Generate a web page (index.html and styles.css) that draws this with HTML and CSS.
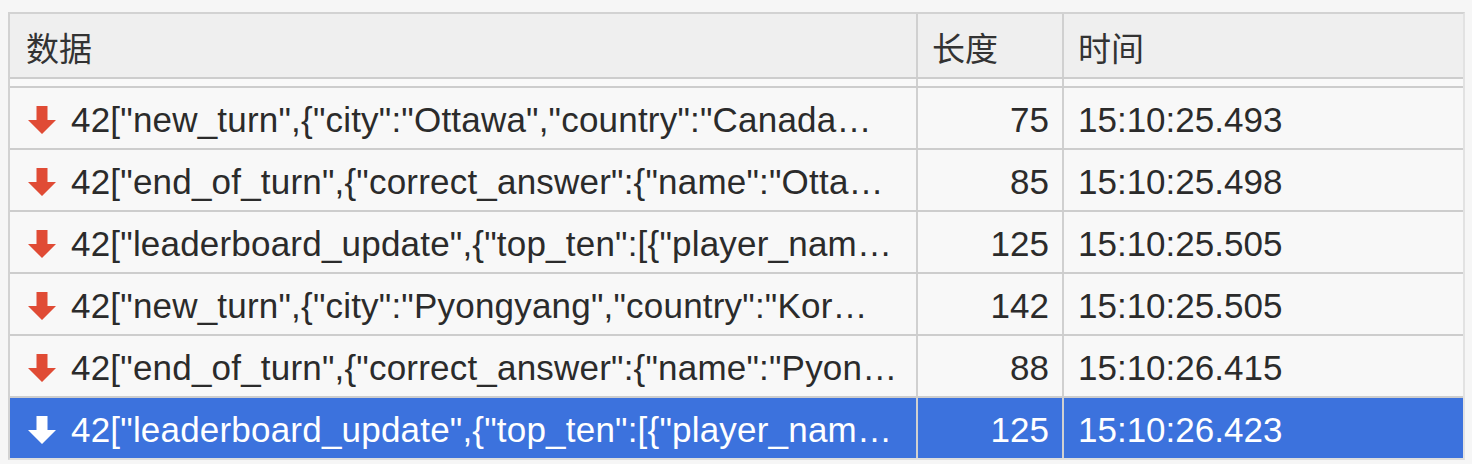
FILE: index.html
```html
<!DOCTYPE html>
<html>
<head>
    <meta charset="utf-8">
    <title>Messages</title>
    <link rel="stylesheet" href="styles.css">
</head>
<body>
    <div class="frames">
        <div class="row head">
            <div class="cell data">数据</div>
            <div class="cell len">长度</div>
            <div class="cell time">时间</div>
        </div>
        <div class="spacer">
            <div class="cell"></div>
            <div class="cell"></div>
            <div class="cell"></div>
        </div>

        <div class="row">
            <div class="cell data"><svg class="arrow" viewBox="0 0 28 28"><path d="M8.5 0h11v14h8.5L14 28 0 14h8.5z"/></svg><span class="text">42["new_turn",{"city":"Ottawa","country":"Canada…</span></div>
            <div class="cell len">75</div>
            <div class="cell time">15:10:25.493</div>
        </div>
        <div class="row">
            <div class="cell data"><svg class="arrow" viewBox="0 0 28 28"><path d="M8.5 0h11v14h8.5L14 28 0 14h8.5z"/></svg><span class="text">42["end_of_turn",{"correct_answer":{"name":"Otta…</span></div>
            <div class="cell len">85</div>
            <div class="cell time">15:10:25.498</div>
        </div>
        <div class="row">
            <div class="cell data"><svg class="arrow" viewBox="0 0 28 28"><path d="M8.5 0h11v14h8.5L14 28 0 14h8.5z"/></svg><span class="text">42["leaderboard_update",{"top_ten":[{"player_nam…</span></div>
            <div class="cell len">125</div>
            <div class="cell time">15:10:25.505</div>
        </div>
        <div class="row">
            <div class="cell data"><svg class="arrow" viewBox="0 0 28 28"><path d="M8.5 0h11v14h8.5L14 28 0 14h8.5z"/></svg><span class="text">42["new_turn",{"city":"Pyongyang","country":"Kor…</span></div>
            <div class="cell len">142</div>
            <div class="cell time">15:10:25.505</div>
        </div>
        <div class="row">
            <div class="cell data"><svg class="arrow" viewBox="0 0 28 28"><path d="M8.5 0h11v14h8.5L14 28 0 14h8.5z"/></svg><span class="text">42["end_of_turn",{"correct_answer":{"name":"Pyon…</span></div>
            <div class="cell len">88</div>
            <div class="cell time">15:10:26.415</div>
        </div>
        <div class="row selected">
            <div class="cell data"><svg class="arrow" viewBox="0 0 28 28"><path d="M8.5 0h11v14h8.5L14 28 0 14h8.5z"/></svg><span class="text">42["leaderboard_update",{"top_ten":[{"player_nam…</span></div>
            <div class="cell len">125</div>
            <div class="cell time">15:10:26.423</div>
        </div>
    </div>
</body>
</html>
```

FILE: styles.css
```css
/* Page */
body {
    margin: 0;
    padding: 12px 7px 0 8px;
    background-color: #f6f6f6;
    font-family: "Liberation Sans", "Noto Sans CJK SC", Arial, sans-serif;
    font-size: 35px;
    color: #2b2b2b;
}

/* Frames table */
.frames {
    border-top: 2px solid #d2d2d2;
    border-left: 2px solid #d2d2d2;
    border-right: 2px solid #e2e2e2;
    border-bottom: 2px solid #dedede;
    background-color: #f8f8f8;
}

.row,
.spacer {
    display: grid;
    grid-template-columns: 908px 146px 1fr;
    height: 62px;
    border-bottom: 2px solid #cdcdcd;
    box-sizing: border-box;
}

.cell {
    display: flex;
    align-items: center;
    padding: 0 12px 0 16px;
    border-right: 2px solid #d0d0d0;
    white-space: nowrap;
    overflow: hidden;
    min-width: 0;
}

.cell:last-child {
    border-right: none;
}

.head {
    height: 65px;
    background-color: #efefef;
    font-family: "Noto Sans CJK SC", "Liberation Sans", sans-serif;
    font-size: 33px;
    color: #333;
}

.head .cell {
    padding-top: 2px;
}

.head .len {
    justify-content: flex-start;
    padding-left: 14px;
}

.spacer {
    height: 9px;
    background-color: #f9f9f9;
}

.len {
    justify-content: flex-end;
    padding-right: 13px;
}

.time {
    padding-left: 14px;
}

.data .text {
    letter-spacing: 0.2px;
    padding-top: 4px;
}

.len,
.time {
    padding-top: 4px;
}

.arrow {
    width: 28px;
    height: 28px;
    flex-shrink: 0;
    margin: 4px 15px 0 2px;
    fill: #e04b35;
}

/* Selected row */
.selected {
    background-color: #3c72dd;
    color: #fff;
    border-bottom: none;
    height: 60px;
}

.selected .arrow {
    fill: #fff;
}
```
